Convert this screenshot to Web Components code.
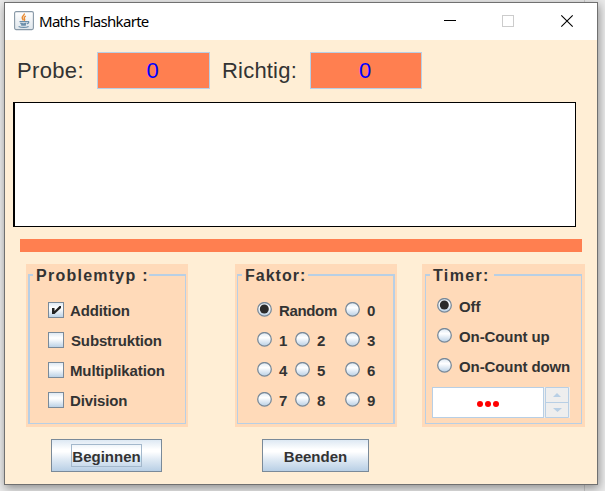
<!DOCTYPE html>
<html lang="de"><head><meta charset="utf-8"><title>Maths Flashkarte</title>
<style>
html,body{margin:0;height:100%}
body{overflow:hidden;background:linear-gradient(90deg,transparent 584px,#ccc 584px 585px,transparent 585px),#eaeaea;font-family:"Liberation Sans",Arial,sans-serif;color:#333}
</style></head><body>
<flash-app></flash-app>
<script>
const define=(name,html,setup)=>customElements.define(name,class extends HTMLElement{
  connectedCallback(){
    if(this.shadowRoot)return;
    const root=this.attachShadow({mode:'open'});
    const t=document.createElement('template');
    t.innerHTML='<style>*{box-sizing:border-box}</style>'+html;
    root.append(t.content.cloneNode(true));
    if(setup)setup(this,root);
  }
});

define('title-bar',`<style>
:host{display:flex;align-items:center;height:37px;padding-left:9px;background:#fff;color:#000;box-sizing:border-box}
span{font:15px/20px "Noto Sans",sans-serif;margin:-2px 0 0 5px;white-space:nowrap;letter-spacing:-.7px;flex:1}
svg{display:block;flex:none}
.logo{margin-top:-2px}
</style>
<svg class="logo" width="20" height="20" viewBox="0 0 20 20"><defs><linearGradient id="g" x2="0" y2="1"><stop stop-color="#fff"/><stop offset="1" stop-color="#dfe6ec"/></linearGradient></defs>
<rect x=".6" y=".6" width="18.8" height="18" rx="1.5" fill="url(#g)" stroke="#8798a6" stroke-width="1.1"/>
<path d="M10.300 2.500c.6 2-3.100 2.800-2 4.800l1.100 2M11.800 5c-1.800 1.200-2 2-1.200 3.200.3.700 0 1.100-.5 1.500" fill="none" stroke="#e8892f" stroke-width="1.400"/>
<path d="M5.500 10.700h7.600M6.300 12.400c2 .6 4.400.6 6 0M7 13.800c1.600.5 3.500.5 5 0M13.200 10.600c2-.4 2.200 1.600-.2 2.200M4.600 15.500c2.600 1.200 7.500 1.200 10 0" fill="none" stroke="#6b8eaa" stroke-width="1.300"/></svg>
<span><slot></slot></span>
<svg width="153" height="37" viewBox="0 0 153 37" shape-rendering="crispEdges"><path d="M0 17.500h12" stroke="#000"/><rect x="58.500" y="12.500" width="11" height="11" fill="none" stroke="#ccc"/><path d="M117.300 12.300l11.400 11.400M128.700 12.300l-11.400 11.400" stroke="#000" stroke-width="1.100" shape-rendering="auto"/></svg>`);

define('score-field',`<style>
:host{display:flex;height:37px;align-items:center;font-size:22px;line-height:37px}
label{white-space:nowrap;width:var(--lw);letter-spacing:var(--ls)}
output{width:var(--fw);height:37px;background:#ff7f50;border:1px solid #b8cfe5;color:#00f;text-align:center;line-height:36px;padding-right:2px}
</style><label><slot></slot></label><output>0</output>`);

define('titled-panel',`<style>
:host{display:block;background:#ffdab9;height:163px;box-sizing:border-box;padding:10px var(--pr,2px) 3px var(--pl,2px)}
.box{height:150px;border:solid #b8cfe5;border-width:2px var(--br,1px) 1px var(--bl,1px);position:relative;padding:var(--pad)}
b{position:absolute;top:-10px;left:var(--tx);background:#ffdab9;padding:0 var(--tr,3px) 0 var(--tl,3px);font-size:16px;line-height:20px;letter-spacing:var(--ts);white-space:nowrap}
</style><div class="box"><b></b><slot></slot></div>`,(el,root)=>root.querySelector('b').textContent=el.getAttribute('heading'));

define('check-box',`<style>
:host{display:flex;align-items:center;height:16px;margin-bottom:14px;font:bold 15px/18px "Liberation Sans",sans-serif;white-space:nowrap}
i{width:16px;height:16px;flex:none;border:1px solid #7a8a99;background:linear-gradient(#dfe9f3,#fff 35%,#f5f8fb 50%,#bcd2e6);margin-right:var(--g,6px)}
svg{display:block;visibility:hidden}:host([checked]) svg{visibility:visible}
span{position:relative;top:1px;letter-spacing:-.14px}
</style><i><svg width="14" height="14"><path d="M3 5h2.500v3l5-5H12v2l-6.500 6H3z" fill="#222"/></svg></i><span><slot></slot></span>`);

define('radio-button',`<style>
:host{display:flex;align-items:center;height:15px;font:bold 15px/18px "Liberation Sans",sans-serif;white-space:nowrap}
svg{flex:none;display:block;margin-right:7px}circle.dot{display:none}:host([checked]) .dot{display:block}
span{position:relative;top:1px;letter-spacing:var(--ls,-.1px)}
</style><svg width="15" height="15"><defs><linearGradient id="r" x2="0" y2="1"><stop stop-color="#dce7f2"/><stop offset=".38" stop-color="#fff"/><stop offset="1" stop-color="#b8cfe5"/></linearGradient></defs><circle cx="7.500" cy="7.300" r="6.800" fill="url(#r)" stroke="#7a8a99" stroke-width="1.300"/><circle class="dot" cx="7.300" cy="7" r="4.500" fill="#2b2b2b"/></svg><span><slot></slot></span>`);

define('metal-button',`<style>
:host{display:block}
button{display:flex;align-items:center;justify-content:center;width:100%;height:33px;padding:0;border:1px solid #7a8a99;background:linear-gradient(#dde8f3,#fff 30%,#fff 38%,#dde8f3 65%,#b8cfe5);color:#333;font:bold 15px/21px "Liberation Sans",sans-serif}
span{padding:1px 0 0;height:23px;width:71px;border:1px solid transparent;text-align:center}
:host([focused]) span{border-color:#a3b8cc}
</style><button><span><slot></slot></span></button>`);

define('time-spinner',`<style>
:host{display:flex;gap:1px;height:31px;width:138px;background:#eee}
.v{width:112px;border:1px solid #b8cfe5;background:#fff;display:flex;align-items:center;justify-content:center;gap:2px;padding:2px 1px 0 0}
.v i{width:6px;height:6px;border-radius:50%;background:#f00}
svg{display:block}
</style><div class="v"><i></i><i></i><i></i></div>
<svg width="24" height="31"><path d="M.5.5h23v30H.500zM0 15.500h24" fill="#eee" stroke="#b8cfe5"/><path d="M8 10l4-4 4 4zM8 21h9l-4.500 4z" fill="#b8cfe5"/></svg>`);

define('flash-app',`<style>
:host{display:flow-root;padding:2px 0 0 4px}
.win{width:594px;height:483px;border:1px solid #707070;background:#ffeed5;box-shadow:1px 3px 9px #0006}
.scores{display:flex;padding:12px 0 0 12px}
.problem{margin:13px 0 0 8px;width:563px;height:125px;background:#fff;border:1px solid #000;border-left-width:2px}
.bar{margin:12px 0 0 15px;width:562px;height:13px;background:#ff7f50}
.panels{display:flex;margin:12px 0 0 21px}
.factors{display:grid;grid-template-columns:38px 50px 40px;row-gap:15px}
.wide{grid-column:span 2;--ls:-.35px}
.timer{display:grid;gap:15px}
.buttons{display:flex;margin:12px 0 0 46px;gap:100px}
</style>
<div class="win"><title-bar>Maths Flashkarte</title-bar>
<div class="scores"><score-field style="--lw:80px;--fw:113px;--ls:.35px;margin-right:12px">Probe:</score-field><score-field style="--lw:88px;--fw:112px;--ls:.2px">Richtig:</score-field></div>
<div class="problem"></div><div class="bar"></div>
<div class="panels">
<titled-panel heading="Problemtyp :" style="width:162px;margin-right:47px;--bl:2px;--tx:3px;--tr:0px;--ts:1.25px;--pad:26px 0 0 18px"><check-box checked>Addition</check-box><check-box style="--g:7px">Substruktion</check-box><check-box>Multiplikation</check-box><check-box>Division</check-box></titled-panel>
<titled-panel heading="Faktor:" style="width:162px;margin-right:25px;--br:2px;--tx:4px;--tr:1.5px;--ts:1px;--pad:26px 0 0 19px"><div class="factors"><radio-button class="wide" checked>Random</radio-button><radio-button>0</radio-button><radio-button>1</radio-button><radio-button>2</radio-button><radio-button>3</radio-button><radio-button>4</radio-button><radio-button>5</radio-button><radio-button>6</radio-button><radio-button>7</radio-button><radio-button>8</radio-button><radio-button>9</radio-button></div></titled-panel>
<titled-panel heading="Timer:" style="width:163px;--pl:3px;--pr:3px;--tx:4px;--tr:4px;--ts:1.35px;--pad:22px 0 0 11px"><div class="timer"><radio-button checked>Off</radio-button><radio-button>On-Count up</radio-button><radio-button>On-Count down</radio-button></div><time-spinner style="margin:14px 0 0 -5px"></time-spinner></titled-panel>
</div>
<div class="buttons"><metal-button focused style="width:111px">Beginnen</metal-button><metal-button style="width:107px">Beenden</metal-button></div>
</div>`);
</script></body></html>
